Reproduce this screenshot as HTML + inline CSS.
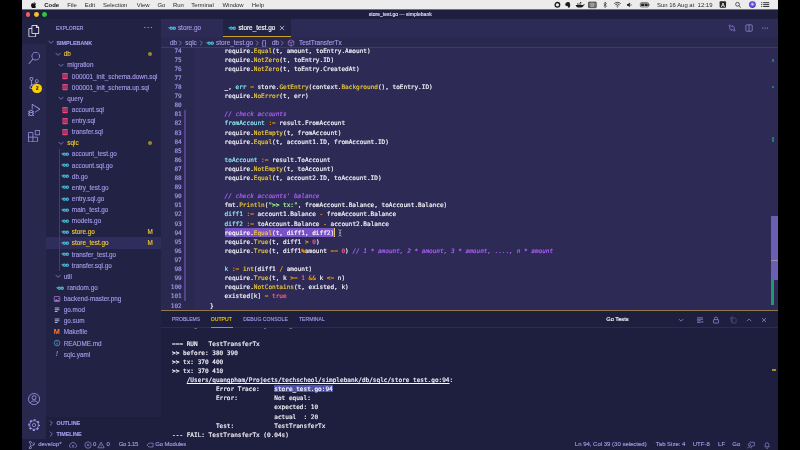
<!DOCTYPE html>
<html><head><meta charset="utf-8"><title>store_test.go — simplebank</title>
<style>
html,body{margin:0;padding:0;background:#000;width:800px;height:450px;overflow:hidden}
*{box-sizing:border-box}
#screen{filter:blur(0.35px);will-change:transform;position:absolute;left:22px;top:0;width:756.3px;height:450px;overflow:hidden;background:#1e1e3f}
#menubar{position:absolute;left:0;top:0;width:100%;height:9.4px;background:#ececec;font:5.95px "Liberation Sans",sans-serif;color:#2a2a2a;white-space:nowrap}
#menubar span{position:absolute;top:0;line-height:10.600px}
#menubar svg{position:absolute}
#titlebar{position:absolute;left:0;top:9.4px;width:100%;height:9.2px;background:#1e1e3f}
#titlebar .tl{position:absolute;top:2.6px;width:4.9px;height:4.9px;border-radius:50%}
#titlebar .t{position:absolute;left:346.700px;top:0.700px;font:5.100px/9.400px "Liberation Sans",sans-serif;color:#e4e0fa;white-space:nowrap;-webkit-text-stroke:0.120px}
#wbw{position:absolute;left:0;top:18.56px;width:756.300px;height:432px;will-change:transform;overflow:hidden}
#wb{zoom:0.50625;-webkit-text-stroke:0.250px;position:absolute;left:0;top:0;width:1494px;height:853px;font:13px "Liberation Sans",sans-serif;color:#a599e9;overflow:hidden}
#wb>div{position:absolute}
#act{left:0;top:0;width:48px;height:830.5px;background:#28284e}
#act svg{position:absolute;left:12px;width:24px;height:24px}
#side{left:48px;top:0;width:227px;height:830.5px;background:#222244;overflow:hidden}
#side .title{position:absolute;left:19px;top:1.500px;line-height:35px;font-size:10px;color:#a599e9}
#side .dots{position:absolute;left:192px;top:1.5px;line-height:32px;font-size:16px;letter-spacing:1px}
#side .hdr{position:absolute;left:0;width:100%;height:22px;line-height:24.500px;font-size:10.700px;font-weight:bold;color:#a599e9;background:#1e1e3f;padding-left:20px}
#side .hdr svg{position:absolute;left:2px;top:3px;width:16px;height:16px}
#tree{position:absolute;left:0;top:58px;width:100%}
.row{position:relative;height:22px;line-height:22px;white-space:nowrap;color:#a599e9;font-size:12.6px}
.row.y{color:#f0cb35}
.row.rsel{background:#2f2d5b}
.row svg.tw{position:relative;display:inline-block;vertical-align:top;width:16px;height:16px;top:3px;margin-right:3.500px;color:#a599e9}
.row svg.fi{position:relative;display:inline-block;vertical-align:top;width:16px;height:16px;top:3px;margin-right:5.500px}
.row span.ft{position:relative;display:inline-block;vertical-align:top;width:16px;height:22px;line-height:22px;text-align:center;margin-right:5.500px;-webkit-text-stroke:0}
.row .bdot{position:absolute;left:201px;top:7px;width:8px;height:8px;border-radius:50%;background:#9c8726}
.row .bm{position:absolute;left:200px;top:0;font-size:12.600px;color:#f0cb35}
#guide{position:absolute;left:25.800px;top:256px;width:1.200px;height:242px;background:#3f3d74}
#ed{left:275px;top:0;width:1219px;height:574.5px;background:#2d2b55;overflow:hidden}
#tabs{position:absolute;left:0;top:0;width:100%;height:35px;background:#2d2b55}
.tab{position:absolute;top:0;height:35px;line-height:35px;font-size:12.650px;white-space:nowrap}
.tab svg.fi{position:absolute;top:9.5px;width:16px;height:16px}
#bc{position:absolute;left:0;top:35px;width:100%;height:21px;line-height:25px;background:#29284f;font-size:12.750px;color:#a599e9;white-space:nowrap}
#bc span,#bc svg{position:absolute}
#code{position:absolute;left:0;top:52.400px;width:100%;font:12px/18px "DejaVu Sans Mono","Liberation Mono",monospace;color:#fbf9ff;-webkit-text-stroke:0.300px}
.ln{height:18px;position:relative}
.ln .num{position:absolute;left:0;width:40.5px;text-align:right;color:#a599e9}
.ln .src{position:absolute;left:67.5px;white-space:pre}
.f{color:#f0cb35}.o{color:#ff9d00}.n{color:#ff628c}.g{color:#a5ff90}.v{color:#92eef6}
.c{color:#b362ff;font-style:italic}
.sel{background:#7a52c7;display:inline-block;height:18px;color:#fff}
.cur{display:inline-block;width:1.800px;height:18px;background:#dcbf7a;vertical-align:top}
.ti{position:absolute;top:9.500px;width:16px;height:16px}
#edtop{position:absolute;left:0;top:56px;width:100%;height:1.600px;background:#3d3975}
#panel{left:275px;top:574.5px;width:1219px;height:256px;background:#1e1e3f;border-top:2px solid #94774c;overflow:hidden}
#panel .pi{position:absolute;top:9.500px;width:16px;height:16px}
#panel .pt{position:absolute;top:-0.500px;line-height:35px;font-size:10.100px;color:#a599e9}
#ph{position:absolute;left:0;top:0;width:100%;height:34.500px;background:#1e1e3f;border-bottom:1.500px solid #2c2a58}
#out{position:absolute;left:21.500px;top:19px;font:12px/18px "DejaVu Sans Mono","Liberation Mono",monospace;color:#fbf9ff;-webkit-text-stroke:0.300px}
.ol{height:18px;white-space:pre}
.lnk{text-decoration:underline}
.hl{background:#4a4fa8}
#status{left:0;top:830.5px;width:1494px;height:22.5px;background:#1e1e3f;font-size:11.850px;color:#a599e9;white-space:nowrap}
#status span{position:absolute;top:0;line-height:22px}
#status svg{position:absolute}
</style></head><body>
<div id="screen">
<div id="menubar">
<svg style="left:9.2px;top:1.6px;width:5.6px;height:6.4px" viewBox="0 0 170 200"><path fill="#111" d="M150 68c-1 1-21 12-21 37 0 29 25 39 26 39 0 1-4 14-13 27-8 12-17 24-30 24s-16-8-31-8c-15 0-20 8-32 8s-20-11-30-25C8 153 0 127 0 103c0-39 25-60 50-60 13 0 24 9 33 9 8 0 20-9 35-9 6 0 27 1 41 21zM104 31c6-7 11-18 11-28 0-1 0-3-0-4-10 0-23 7-30 15-6 7-11 17-11 28 0 2 0 3 0 4 1 0 2 0 3 0 9 0 21-6 27-15z"/></svg>
<span style="left:22.3px;font-weight:bold;color:#111">Code</span>
<span style="left:45.3px">File</span>
<span style="left:62.8px">Edit</span>
<span style="left:81px">Selection</span>
<span style="left:114.8px">View</span>
<span style="left:135.4px">Go</span>
<span style="left:151px">Run</span>
<span style="left:169.3px">Terminal</span>
<span style="left:200.5px">Window</span>
<span style="left:229.8px">Help</span>
<span style="left:635px">Sun 16 Aug at&nbsp; 12:19</span>
<svg style="left:520px;top:0;width:236px;height:9.400px" viewBox="520 0 236 9.400">
<circle cx="535.300" cy="4.800" r="2.300" fill="none" stroke="#1c1c1c" stroke-width="1.300"/>
<path d="M544.300 2.600c1.200-.9 3.100-.6 3.600.8.400 1.300.3 3.200-.5 4.100-.6.600-1.500.4-1.500-.4 0-.7-.5-1-1.300-1.100-1-.1-1.500-.8-1.400-1.700.1-.8.500-1.300 1.100-1.700z" fill="#1c1c1c"/>
<path d="M553.600 5h7.300c.5-.6 1.100-.8 1.800-.6-.2.500-.6.800-1.100 1-.6 1.500-2.100 2.200-4.200 2.200-2.300 0-3.600-.9-3.800-2.600zM555 3.400h1.200v1.200H555zM556.500 3.400h1.200v1.200h-1.200zM558 3.400h1.200v1.200H558zM558 1.900h1.200v1.200H558z" fill="#1c1c1c"/>
<rect x="566.400" y="2.100" width="7.800" height="5.600" rx=".6" fill="#9a9a9a" stroke="#2a2a2a" stroke-width=".7"/><path d="M567.700 2.100v5.600M572.900 2.100v5.600" stroke="#2a2a2a" stroke-width=".8" stroke-dasharray=".8 .6"/>
<path d="M581.600 3.300l2.800 2.800-1.400 1.500V2l1.400 1.500-2.800 2.800" fill="none" stroke="#1c1c1c" stroke-width=".6"/>
<g fill="none" stroke="#1c1c1c" stroke-width=".75"><path d="M592.100 3.700a4.700 4.700 0 0 1 6.600 0"/><path d="M593.200 4.900a3.100 3.100 0 0 1 4.400 0"/><path d="M594.300 6.100a1.600 1.600 0 0 1 2.200 0"/></g><circle cx="595.400" cy="7" r=".5" fill="#1c1c1c"/>
<path d="M605 3.900h1.100l1.700-1.500v4.900l-1.700-1.500H605z" fill="#1c1c1c"/><path d="M608.600 3.600a1.800 1.800 0 0 1 0 2.500" fill="none" stroke="#1c1c1c" stroke-width=".5"/>
<rect x="618.300" y="2.700" width="8.200" height="4.200" rx=".9" fill="none" stroke="#1c1c1c" stroke-width=".6"/><rect x="619.100" y="3.500" width="6.600" height="2.600" rx=".3" fill="#1c1c1c"/><path d="M627.100 4.100v1.400" stroke="#1c1c1c" stroke-width=".7"/><path d="M622.900 3.600l-1 1.300h1.100l-.6 1.200" fill="none" stroke="#ececec" stroke-width=".45"/>
<rect x="697.700" y="1.300" width="6.400" height="6.400" rx=".9" fill="#262626"/>
<circle cx="715.600" cy="4.300" r="1.900" fill="none" stroke="#1c1c1c" stroke-width=".7"/><path d="M717 5.700l1.900 1.900" stroke="#1c1c1c" stroke-width=".8"/>
<defs><radialGradient id="siri" cx=".5" cy=".45" r=".6"><stop offset="0" stop-color="#f4e9ff"/><stop offset=".35" stop-color="#b46be8"/><stop offset=".7" stop-color="#3b3fd0"/><stop offset="1" stop-color="#14142e"/></radialGradient></defs>
<circle cx="730.500" cy="4.600" r="3.300" fill="url(#siri)"/>
<path d="M741.300 2.700h6M741.300 4.600h6M741.300 6.500h6" stroke="#1c1c1c" stroke-width=".9"/><path d="M739.300 2.700h1M739.300 4.600h1M739.300 6.500h1" stroke="#1c1c1c" stroke-width=".9"/>
</svg>
<span style="left:699.100px;color:#fff;font-weight:bold;font-size:5.400px">A</span>

</div>
<div style="position:absolute;left:0;top:9px;width:100%;height:1px;background:#6f6f88;z-index:5"></div>
<div id="titlebar">
<div class="tl" style="left:3.6px;background:#f25f57"></div>
<div class="tl" style="left:12px;background:#f8bc31"></div>
<div class="tl" style="left:20.4px;background:#2bc840"></div>
<div class="t">store_test.go — simplebank</div>
</div>
<div id="wbw"><div id="wb">
<div id="act">
<div style="position:absolute;left:0;top:0;width:48px;height:50px;background:#222244"></div>
<svg style="top:12.5px" viewBox="0 0 24 24"><path fill="#fff" d="M17.5 0h-9L7 1.5V6H2.5L1 7.5v15.07L2.5 24h12.07L16 22.57V18h4.7l1.300-1.430V4.500L17.500 0zm0 2.120l2.380 2.380H17.500V2.120zm-3 20.380h-12v-15H7v9.070L8.500 18h6v4.500zm6-6h-12v-15H16V6h4.500v10.500z"/></svg>
<svg style="top:64.300px;left:11.500px" viewBox="0 0 24 24"><path fill="#a599e9" d="M15.250 0a8.250 8.250 0 0 0-6.180 13.720L1 22.880l1.120 1 8.050-9.120A8.251 8.251 0 1 0 15.250.010V0zm0 15a6.750 6.750 0 1 1 0-13.500 6.750 6.750 0 0 1 0 13.500z"/></svg>
<svg style="top:114.700px" viewBox="0 0 24 24"><path fill="#a599e9" d="M21.007 8.222A3.738 3.738 0 0 0 15.045 5.200a3.737 3.737 0 0 0 1.156 6.583 2.988 2.988 0 0 1-2.668 1.670h-2.990a4.456 4.456 0 0 0-2.989 1.165V7.400a3.737 3.737 0 1 0-1.494 0v9.117a3.776 3.776 0 1 0 1.816.099 2.990 2.990 0 0 1 2.668-1.667h2.990a4.484 4.484 0 0 0 4.223-3.039 3.736 3.736 0 0 0 3.250-3.687zM4.565 3.738a2.242 2.242 0 1 1 4.484 0 2.242 2.242 0 0 1-4.484 0zm4.484 16.441a2.242 2.242 0 1 1-4.484 0 2.242 2.242 0 0 1 4.484 0zm8.221-9.715a2.242 2.242 0 1 1 0-4.485 2.242 2.242 0 0 1 0 4.485z"/></svg>
<svg style="top:168px" viewBox="0 0 24 24"><path fill="#a599e9" d="M10.940 13.500l-1.320 1.320a3.730 3.730 0 0 0-7.240 0L1.060 13.500 0 14.560l1.720 1.720-.220.220V18H0v1.500h1.500v.080c.077.489.214.966.410 1.420L0 22.940 1.060 24l1.650-1.650A4.308 4.308 0 0 0 6 24a4.310 4.310 0 0 0 3.290-1.650L10.940 24 12 22.940 10.090 21c.198-.464.336-.951.410-1.450v-.100H12V18h-1.500v-1.500l-.220-.220L12 14.560l-1.060-1.060zM6 13.500a2.250 2.250 0 0 1 2.250 2.250h-4.500A2.250 2.250 0 0 1 6 13.500zm3 6a3.330 3.330 0 0 1-3 3 3.330 3.330 0 0 1-3-3v-2.250h6v2.250zm14.760-9.900v1.260L13.500 17.370V15.600l8.500-5.370L9 2v9.460a5.070 5.070 0 0 0-1.500-.720V.630L8.640 0l15.120 9.600z"/></svg>
<svg style="top:219.400px" viewBox="0 0 24 24"><path fill="#a599e9" d="M13.500 1.500L15 0h7.500L24 1.500V9l-1.500 1.500H15L13.500 9V1.500zm1.500 0V9h7.500V1.500H15zM0 15V6l1.500-1.500H9L10.500 6v7.500H18l1.500 1.500v7.500L18 24H1.500L0 22.500V15zm9-1.500V6H1.500v7.500H9zM9 15H1.500v7.500H9V15zm1.500 7.500H18V15h-7.500v7.500z"/></svg>
<div style="position:absolute;left:20.500px;top:127.500px;width:19px;height:19px;border-radius:50%;background:#fad000;color:#222;font-size:9px;font-weight:bold;line-height:19px;text-align:center">2</div>
<svg style="top:738px" viewBox="0 0 24 24"><g fill="none" stroke="#a599e9" stroke-width="1.600"><circle cx="12" cy="12" r="11"/><circle cx="12" cy="9.300" r="4"/><path d="M4.500 19.800c1.500-5.500 13.500-5.500 15 0"/></g></svg>
<svg style="top:790px" viewBox="0 0 24 24"><g fill="none" stroke="#a599e9"><circle cx="12" cy="12" r="10.300" stroke-width="2.800" stroke-dasharray="4.300 3.790" stroke-dashoffset="2.150"/><circle cx="12" cy="12" r="8.600" stroke-width="1.500"/><circle cx="12" cy="12" r="3.200" stroke-width="1.500"/></g></svg>
</div>
<div id="side">
<div class="title">EXPLORER</div>
<div class="dots">···</div>
<div class="hdr" style="top:35px;background:#222244"><svg class="tw" viewBox="0 0 16 16"><path d="M3.2 5.8L8 10.6l4.8-4.8" fill="none" stroke="currentColor" stroke-width="1.3"/></svg>SIMPLEBANK</div>
<div id="tree">
<div class="row y" style="padding-left:15px"><svg class="tw" viewBox="0 0 16 16"><path d="M3.2 5.8L8 10.6l4.8-4.8" fill="none" stroke="currentColor" stroke-width="1.3"/></svg><span class="lbl">db</span><span class="bdot"></span></div>
<div class="row " style="padding-left:22px"><svg class="tw" viewBox="0 0 16 16"><path d="M3.2 5.8L8 10.6l4.8-4.8" fill="none" stroke="currentColor" stroke-width="1.3"/></svg><span class="lbl">migration</span></div>
<div class="row " style="padding-left:29px"><svg class="fi" viewBox="0 0 16 16"><rect x="2.300" y="1.800" width="11.400" height="12.400" rx="2.200" fill="#f0457b"/><path d="M2.300 6h11.400M2.300 10h11.400" stroke="#222244" stroke-width="1.500"/></svg><span class="lbl">000001_init_schema.down.sql</span></div>
<div class="row " style="padding-left:29px"><svg class="fi" viewBox="0 0 16 16"><rect x="2.300" y="1.800" width="11.400" height="12.400" rx="2.200" fill="#f0457b"/><path d="M2.300 6h11.400M2.300 10h11.400" stroke="#222244" stroke-width="1.500"/></svg><span class="lbl">000001_init_schema.up.sql</span></div>
<div class="row " style="padding-left:22px"><svg class="tw" viewBox="0 0 16 16"><path d="M3.2 5.8L8 10.6l4.8-4.8" fill="none" stroke="currentColor" stroke-width="1.3"/></svg><span class="lbl">query</span></div>
<div class="row " style="padding-left:29px"><svg class="fi" viewBox="0 0 16 16"><rect x="2.300" y="1.800" width="11.400" height="12.400" rx="2.200" fill="#f0457b"/><path d="M2.300 6h11.400M2.300 10h11.400" stroke="#222244" stroke-width="1.500"/></svg><span class="lbl">account.sql</span></div>
<div class="row " style="padding-left:29px"><svg class="fi" viewBox="0 0 16 16"><rect x="2.300" y="1.800" width="11.400" height="12.400" rx="2.200" fill="#f0457b"/><path d="M2.300 6h11.400M2.300 10h11.400" stroke="#222244" stroke-width="1.500"/></svg><span class="lbl">entry.sql</span></div>
<div class="row " style="padding-left:29px"><svg class="fi" viewBox="0 0 16 16"><rect x="2.300" y="1.800" width="11.400" height="12.400" rx="2.200" fill="#f0457b"/><path d="M2.300 6h11.400M2.300 10h11.400" stroke="#222244" stroke-width="1.500"/></svg><span class="lbl">transfer.sql</span></div>
<div class="row y" style="padding-left:22px"><svg class="tw" viewBox="0 0 16 16"><path d="M3.2 5.8L8 10.6l4.8-4.8" fill="none" stroke="currentColor" stroke-width="1.3"/></svg><span class="lbl">sqlc</span><span class="bdot"></span></div>
<div class="row " style="padding-left:29px"><svg class="fi" viewBox="0 0 16 16"><g fill="none" stroke="#4fd0e8" stroke-width="2.100"><ellipse cx="6.3" cy="8.2" rx="2.3" ry="2.2"/><ellipse cx="12.3" cy="8.2" rx="2.3" ry="2.2"/></g><path d="M0.5 6.7h3M1.5 8.6h2" stroke="#4fd0e8" stroke-width="1.100"/></svg><span class="lbl">account_test.go</span></div>
<div class="row " style="padding-left:29px"><svg class="fi" viewBox="0 0 16 16"><g fill="none" stroke="#4fd0e8" stroke-width="2.100"><ellipse cx="6.3" cy="8.2" rx="2.3" ry="2.2"/><ellipse cx="12.3" cy="8.2" rx="2.3" ry="2.2"/></g><path d="M0.5 6.7h3M1.5 8.6h2" stroke="#4fd0e8" stroke-width="1.100"/></svg><span class="lbl">account.sql.go</span></div>
<div class="row " style="padding-left:29px"><svg class="fi" viewBox="0 0 16 16"><g fill="none" stroke="#4fd0e8" stroke-width="2.100"><ellipse cx="6.3" cy="8.2" rx="2.3" ry="2.2"/><ellipse cx="12.3" cy="8.2" rx="2.3" ry="2.2"/></g><path d="M0.5 6.7h3M1.5 8.6h2" stroke="#4fd0e8" stroke-width="1.100"/></svg><span class="lbl">db.go</span></div>
<div class="row " style="padding-left:29px"><svg class="fi" viewBox="0 0 16 16"><g fill="none" stroke="#4fd0e8" stroke-width="2.100"><ellipse cx="6.3" cy="8.2" rx="2.3" ry="2.2"/><ellipse cx="12.3" cy="8.2" rx="2.3" ry="2.2"/></g><path d="M0.5 6.7h3M1.5 8.6h2" stroke="#4fd0e8" stroke-width="1.100"/></svg><span class="lbl">entry_test.go</span></div>
<div class="row " style="padding-left:29px"><svg class="fi" viewBox="0 0 16 16"><g fill="none" stroke="#4fd0e8" stroke-width="2.100"><ellipse cx="6.3" cy="8.2" rx="2.3" ry="2.2"/><ellipse cx="12.3" cy="8.2" rx="2.3" ry="2.2"/></g><path d="M0.5 6.7h3M1.5 8.6h2" stroke="#4fd0e8" stroke-width="1.100"/></svg><span class="lbl">entry.sql.go</span></div>
<div class="row " style="padding-left:29px"><svg class="fi" viewBox="0 0 16 16"><g fill="none" stroke="#4fd0e8" stroke-width="2.100"><ellipse cx="6.3" cy="8.2" rx="2.3" ry="2.2"/><ellipse cx="12.3" cy="8.2" rx="2.3" ry="2.2"/></g><path d="M0.5 6.7h3M1.5 8.6h2" stroke="#4fd0e8" stroke-width="1.100"/></svg><span class="lbl">main_test.go</span></div>
<div class="row " style="padding-left:29px"><svg class="fi" viewBox="0 0 16 16"><g fill="none" stroke="#4fd0e8" stroke-width="2.100"><ellipse cx="6.3" cy="8.2" rx="2.3" ry="2.2"/><ellipse cx="12.3" cy="8.2" rx="2.3" ry="2.2"/></g><path d="M0.5 6.7h3M1.5 8.6h2" stroke="#4fd0e8" stroke-width="1.100"/></svg><span class="lbl">models.go</span></div>
<div class="row y" style="padding-left:29px"><svg class="fi" viewBox="0 0 16 16"><g fill="none" stroke="#4fd0e8" stroke-width="2.100"><ellipse cx="6.3" cy="8.2" rx="2.3" ry="2.2"/><ellipse cx="12.3" cy="8.2" rx="2.3" ry="2.2"/></g><path d="M0.5 6.7h3M1.5 8.6h2" stroke="#4fd0e8" stroke-width="1.100"/></svg><span class="lbl">store.go</span><span class="bm">M</span></div>
<div class="row y rsel" style="padding-left:29px"><svg class="fi" viewBox="0 0 16 16"><g fill="none" stroke="#4fd0e8" stroke-width="2.100"><ellipse cx="6.3" cy="8.2" rx="2.3" ry="2.2"/><ellipse cx="12.3" cy="8.2" rx="2.3" ry="2.2"/></g><path d="M0.5 6.7h3M1.5 8.6h2" stroke="#4fd0e8" stroke-width="1.100"/></svg><span class="lbl">store_test.go</span><span class="bm">M</span></div>
<div class="row " style="padding-left:29px"><svg class="fi" viewBox="0 0 16 16"><g fill="none" stroke="#4fd0e8" stroke-width="2.100"><ellipse cx="6.3" cy="8.2" rx="2.3" ry="2.2"/><ellipse cx="12.3" cy="8.2" rx="2.3" ry="2.2"/></g><path d="M0.5 6.7h3M1.5 8.6h2" stroke="#4fd0e8" stroke-width="1.100"/></svg><span class="lbl">transfer_test.go</span></div>
<div class="row " style="padding-left:29px"><svg class="fi" viewBox="0 0 16 16"><g fill="none" stroke="#4fd0e8" stroke-width="2.100"><ellipse cx="6.3" cy="8.2" rx="2.3" ry="2.2"/><ellipse cx="12.3" cy="8.2" rx="2.3" ry="2.2"/></g><path d="M0.5 6.7h3M1.5 8.6h2" stroke="#4fd0e8" stroke-width="1.100"/></svg><span class="lbl">transfer.sql.go</span></div>
<div class="row " style="padding-left:15px"><svg class="tw" viewBox="0 0 16 16"><path d="M3.2 5.8L8 10.6l4.8-4.8" fill="none" stroke="currentColor" stroke-width="1.3"/></svg><span class="lbl">util</span></div>
<div class="row " style="padding-left:20px"><svg class="fi" viewBox="0 0 16 16"><g fill="none" stroke="#4fd0e8" stroke-width="2.100"><ellipse cx="6.3" cy="8.2" rx="2.3" ry="2.2"/><ellipse cx="12.3" cy="8.2" rx="2.3" ry="2.2"/></g><path d="M0.5 6.7h3M1.5 8.6h2" stroke="#4fd0e8" stroke-width="1.100"/></svg><span class="lbl">random.go</span></div>
<div class="row " style="padding-left:13px"><svg class="fi" viewBox="0 0 16 16"><rect x="2.5" y="3" width="11" height="10" rx="1" fill="none" stroke="#a074c4" stroke-width="1.6"/><path d="M3 12l3.5-4 2.5 2.5 1.5-1.5 2.5 3z" fill="#a074c4"/><circle cx="10.5" cy="6.3" r="1.1" fill="#a074c4"/></svg><span class="lbl">backend-master.png</span></div>
<div class="row " style="padding-left:13px"><svg class="fi" viewBox="0 0 16 16"><path d="M3.5 4h9M3.5 7.5h9M3.5 11h5.5" stroke="#b5b0d8" stroke-width="2"/></svg><span class="lbl">go.mod</span></div>
<div class="row " style="padding-left:13px"><svg class="fi" viewBox="0 0 16 16"><path d="M3.5 4h9M3.5 7.5h9M3.5 11h5.5" stroke="#b5b0d8" stroke-width="2"/></svg><span class="lbl">go.sum</span></div>
<div class="row " style="padding-left:13px"><span class="fi ft" style="color:#ff7a2a;font-weight:bold;font-size:14.500px">M</span><span class="lbl">Makefile</span></div>
<div class="row " style="padding-left:13px"><svg class="fi" viewBox="0 0 16 16"><circle cx="8" cy="8" r="5.6" fill="none" stroke="#5aa9d8" stroke-width="1.4"/><path d="M8 7.2v4" stroke="#5aa9d8" stroke-width="1.6"/><circle cx="8" cy="5" r="0.95" fill="#5aa9d8"/></svg><span class="lbl">README.md</span></div>
<div class="row " style="padding-left:13px"><span class="fi ft" style="color:#c06ae0;font-style:italic;font-weight:bold;font-size:14px">!</span><span class="lbl">sqlc.yaml</span></div>

</div>
<div id="guide"></div>
<div class="hdr" style="top:786.5px"><svg class="tw" viewBox="0 0 16 16"><path d="M5.8 3.2L10.6 8l-4.8 4.8" fill="none" stroke="currentColor" stroke-width="1.3"/></svg>OUTLINE</div>
<div class="hdr" style="top:808.5px"><svg class="tw" viewBox="0 0 16 16"><path d="M5.8 3.2L10.6 8l-4.8 4.8" fill="none" stroke="currentColor" stroke-width="1.3"/></svg>TIMELINE</div>
</div>
<div id="ed">
<div style="position:absolute;left:0;top:57px;width:65.500px;height:518px;background:#29284f"></div>
<div style="position:absolute;left:45.500px;top:180.500px;width:2.500px;height:377px;background:#544190"></div>
<div id="code">
<div class="ln"><span class="num">74</span><span class="src">        require.<span class="f">Equal</span>(t, amount, toEntry.Amount)</span></div>
<div class="ln"><span class="num">75</span><span class="src">        require.<span class="f">NotZero</span>(t, toEntry.ID)</span></div>
<div class="ln"><span class="num">76</span><span class="src">        require.<span class="f">NotZero</span>(t, toEntry.CreatedAt)</span></div>
<div class="ln"><span class="num">77</span><span class="src"></span></div>
<div class="ln"><span class="num">78</span><span class="src">        _, <span class="v">err</span> <span class="o">=</span> store.<span class="f">GetEntry</span>(context.<span class="f">Background</span>(), toEntry.ID)</span></div>
<div class="ln"><span class="num">79</span><span class="src">        require.<span class="f">NoError</span>(t, err)</span></div>
<div class="ln"><span class="num">80</span><span class="src"></span></div>
<div class="ln"><span class="num">81</span><span class="src">        <span class="c">// check accounts</span></span></div>
<div class="ln"><span class="num">82</span><span class="src">        <span class="v">fromAccount</span> <span class="o">:=</span> result.FromAccount</span></div>
<div class="ln"><span class="num">83</span><span class="src">        require.<span class="f">NotEmpty</span>(t, fromAccount)</span></div>
<div class="ln"><span class="num">84</span><span class="src">        require.<span class="f">Equal</span>(t, account1.ID, fromAccount.ID)</span></div>
<div class="ln"><span class="num">85</span><span class="src"></span></div>
<div class="ln"><span class="num">86</span><span class="src">        <span class="v">toAccount</span> <span class="o">:=</span> result.ToAccount</span></div>
<div class="ln"><span class="num">87</span><span class="src">        require.<span class="f">NotEmpty</span>(t, toAccount)</span></div>
<div class="ln"><span class="num">88</span><span class="src">        require.<span class="f">Equal</span>(t, account2.ID, toAccount.ID)</span></div>
<div class="ln"><span class="num">89</span><span class="src"></span></div>
<div class="ln"><span class="num">90</span><span class="src">        <span class="c">// check accounts' balance</span></span></div>
<div class="ln"><span class="num">91</span><span class="src">        fmt.<span class="f">Println</span>(<span class="g">"&gt;&gt; tx:"</span>, fromAccount.Balance, toAccount.Balance)</span></div>
<div class="ln"><span class="num">92</span><span class="src">        <span class="v">diff1</span> <span class="o">:=</span> account1.Balance <span class="o">-</span> fromAccount.Balance</span></div>
<div class="ln"><span class="num">93</span><span class="src">        <span class="v">diff2</span> <span class="o">:=</span> toAccount.Balance <span class="o">-</span> account2.Balance</span></div>
<div class="ln"><span class="num">94</span><span class="src">        <span class="sel">require.<span class="f">Equal</span>(t, diff1, diff2)</span><span class="cur"></span></span></div>
<div class="ln"><span class="num">95</span><span class="src">        require.<span class="f">True</span>(t, diff1 <span class="o">&gt;</span> <span class="n">0</span>)</span></div>
<div class="ln"><span class="num">96</span><span class="src">        require.<span class="f">True</span>(t, diff1<span class="o">%</span>amount <span class="o">==</span> <span class="n">0</span>) <span class="c">// 1 * amount, 2 * amount, 3 * amount, ...., n * amount</span></span></div>
<div class="ln"><span class="num">97</span><span class="src"></span></div>
<div class="ln"><span class="num">98</span><span class="src">        <span class="v">k</span> <span class="o">:=</span> <span class="f">int</span>(diff1 <span class="o">/</span> amount)</span></div>
<div class="ln"><span class="num">99</span><span class="src">        require.<span class="f">True</span>(t, k <span class="o">&gt;=</span> <span class="n">1</span> <span class="o">&amp;&amp;</span> k <span class="o">&lt;=</span> n)</span></div>
<div class="ln"><span class="num">100</span><span class="src">        require.<span class="f">NotContains</span>(t, existed, k)</span></div>
<div class="ln"><span class="num">101</span><span class="src">        existed[k] <span class="o">=</span> <span class="n">true</span></span></div>
<div class="ln"><span class="num">102</span><span class="src">    }</span></div>

</div>
<div id="tabs">
<div class="tab" style="left:0;width:122.500px;background:#2d2b55;color:#a599e9"><svg class="fi" style="left:14px" viewBox="0 0 16 16"><g fill="none" stroke="#4fd0e8" stroke-width="2.100"><ellipse cx="6.3" cy="8.2" rx="2.3" ry="2.2"/><ellipse cx="12.3" cy="8.2" rx="2.3" ry="2.2"/></g><path d="M0.5 6.7h3M1.5 8.6h2" stroke="#4fd0e8" stroke-width="1.100"/></svg><span style="position:absolute;left:33px">store.go</span></div>
<div class="tab" style="left:122.500px;width:133.500px;background:#222244;color:#fff;border-bottom:2px solid #c9a227"><svg class="fi" style="left:10px" viewBox="0 0 16 16"><g fill="none" stroke="#4fd0e8" stroke-width="2.100"><ellipse cx="6.3" cy="8.2" rx="2.3" ry="2.2"/><ellipse cx="12.3" cy="8.2" rx="2.3" ry="2.2"/></g><path d="M0.5 6.7h3M1.5 8.6h2" stroke="#4fd0e8" stroke-width="1.100"/></svg><span style="position:absolute;left:30px">store_test.go</span><svg style="position:absolute;left:108.500px;top:9.500px;width:16px;height:16px" viewBox="0 0 16 16"><path d="M3.800 3.800l8.400 8.400M12.200 3.800l-8.400 8.400" stroke="#e8e4ff" stroke-width="1.300"/></svg></div>
</div>
<div id="bc">
<span style="left:17.300px">db</span><svg style="left:28.7px;top:5px;width:16px;height:16px" viewBox="0 0 16 16"><path d="M5.800 3.200L10.600 8l-4.800 4.800" fill="none" stroke="#a599e9" stroke-width="1.200"/></svg><span style="left:47.700px">sqlc</span><svg style="left:71.0px;top:5px;width:16px;height:16px" viewBox="0 0 16 16"><path d="M5.800 3.200L10.600 8l-4.800 4.800" fill="none" stroke="#a599e9" stroke-width="1.200"/></svg>
<svg style="left:88.300px;top:4.500px;width:16px;height:16px" viewBox="0 0 16 16"><g fill="none" stroke="#4fd0e8" stroke-width="2.100"><ellipse cx="6.3" cy="8.2" rx="2.3" ry="2.2"/><ellipse cx="12.3" cy="8.2" rx="2.3" ry="2.2"/></g><path d="M0.5 6.7h3M1.5 8.6h2" stroke="#4fd0e8" stroke-width="1.100"/></svg><span style="left:108.100px">store_test.go</span><svg style="left:180.8px;top:5px;width:16px;height:16px" viewBox="0 0 16 16"><path d="M5.800 3.200L10.600 8l-4.800 4.800" fill="none" stroke="#a599e9" stroke-width="1.200"/></svg><span style="left:198.500px;letter-spacing:1px">{}</span><span style="left:218.800px">db</span><svg style="left:231.0px;top:5px;width:16px;height:16px" viewBox="0 0 16 16"><path d="M5.800 3.200L10.600 8l-4.800 4.800" fill="none" stroke="#a599e9" stroke-width="1.200"/></svg>
<svg style="left:248.300px;top:4.500px;width:16px;height:16px" viewBox="0 0 16 16"><g fill="none" stroke="#b48ae8" stroke-width="1.200" stroke-linejoin="round"><path d="M8 1.800l5.500 2.800v6.600L8 14.200l-5.500-3V4.600z"/><path d="M2.500 4.600L8 7.600l5.500-3M8 7.600v6.600"/></g></svg>
<span style="left:272.100px">TestTransferTx</span>
</div>
<div id="edtop"></div>
<div style="position:absolute;left:1205.500px;top:79px;width:4.500px;height:5px;background:#1e7c6a"></div>
<div style="position:absolute;left:1205.500px;top:132px;width:4.500px;height:5px;background:#1e7c6a"></div>
<div style="position:absolute;left:1205.500px;top:233px;width:4.500px;height:10px;background:#1e7c6a"></div>
<div style="position:absolute;left:1204px;top:390px;width:15px;height:125px;background:#6b5fb3"></div>
<div style="position:absolute;left:1204px;top:476px;width:15px;height:2px;background:#a58f9c"></div>
<div style="position:absolute;left:1204px;top:514.500px;width:6px;height:51px;background:#1f9a70"></div>
<svg style="position:absolute;left:347.500px;top:409px;width:12px;height:27.500px" viewBox="0 0 14 32"><path d="M3 8.500c2.500 0 4 .8 4 2.500v10c0 1.700-1.500 2.500-4 2.500M11 8.500c-2.500 0-4 .8-4 2.500M7 21c0 1.700 1.500 2.500 4 2.500M4.500 16h5" fill="none" stroke="#1a1a30" stroke-width="3.200"/><path d="M3 8.500c2.500 0 4 .8 4 2.500v10c0 1.700-1.500 2.500-4 2.500M11 8.500c-2.500 0-4 .8-4 2.500M7 21c0 1.700 1.500 2.500 4 2.500M4.500 16h5" fill="none" stroke="#e8e6f0" stroke-width="1.400"/></svg>
<svg class="ti" style="left:1120.400px" viewBox="0 0 16 16"><g fill="none" stroke="#8f7fe0" stroke-width="1.300"><circle cx="3.500" cy="3.500" r="1.600"/><circle cx="12.500" cy="12.500" r="1.600"/><path d="M3.500 5.200v4.300a2 2 0 0 0 2 2h3M12.500 10.800V6.500a2 2 0 0 0-2-2h-3M9 2.500l-2 2 2 2M7 9.500l2 2-2 2"/></g></svg>
<svg class="ti" style="left:1153.800px" viewBox="0 0 16 16"><g fill="none" stroke="#a599e9" stroke-width="1.300"><rect x="1.700" y="1.700" width="12.600" height="12.600" rx="1.500"/><path d="M8 1.700v12.600"/></g></svg>
<svg class="ti" style="left:1184.600px" viewBox="0 0 16 16"><g fill="#a599e9"><circle cx="3.500" cy="8" r="1.150"/><circle cx="8" cy="8" r="1.150"/><circle cx="12.500" cy="8" r="1.150"/></g></svg>

</div>
<div id="panel">
<div id="out">
<div class="ol">Running tool: /usr/local/go/bin/go test -timeout 30s -run ^TestTransferTx$</div>
<div class="ol"></div>
<div class="ol">=== RUN   TestTransferTx</div>
<div class="ol">&gt;&gt; before: 380 390</div>
<div class="ol">&gt;&gt; tx: 370 400</div>
<div class="ol">&gt;&gt; tx: 370 410</div>
<div class="ol">    <span class="lnk">/Users/quangpham/Projects/techschool/simplebank/db/sqlc/store_test.go:94</span>:</div>
<div class="ol">            Error Trace:    <span class="hl">store_test.go:94</span></div>
<div class="ol">            Error:          Not equal:</div>
<div class="ol">                            expected: 10</div>
<div class="ol">                            actual  : 20</div>
<div class="ol">            Test:           TestTransferTx</div>
<div class="ol">--- FAIL: TestTransferTx (0.04s)</div>

</div>
<div style="position:absolute;left:1206px;top:114px;width:9px;height:5px;background:#a88d2c"></div>
<div id="ph">
<span class="pt" style="left:21px">PROBLEMS</span>
<span class="pt" style="left:98px;color:#fad000">OUTPUT</span>
<span class="pt" style="left:162px">DEBUG CONSOLE</span>
<span class="pt" style="left:272px">TERMINAL</span>
<span class="pt" style="left:879px;font-size:11.300px;color:#fff;top:0.500px">Go Tests</span>
<svg class="pi" style="left:1018.700px" viewBox="0 0 16 16"><path d="M3.500 5.800L8 10.300l4.500-4.500" fill="none" stroke="#a599e9" stroke-width="1.300"/></svg>
<svg class="pi" style="left:1055.400px" viewBox="0 0 16 16"><path d="M2 3.500h12M2 6.500h12M2 9.500h7.500M2 12.500h7.500" stroke="#a599e9" stroke-width="1.300"/><path d="M10.800 9.800l3.400 3.400M14.200 9.800l-3.400 3.400" stroke="#a599e9" stroke-width="1.200"/></svg>
<svg class="pi" style="left:1087.800px" viewBox="0 0 16 16"><g fill="none" stroke="#a599e9" stroke-width="1.300"><rect x="3" y="7.200" width="10" height="6.800" rx="1"/><path d="M5 7.200V5a3 3 0 0 1 6 0v2.200"/></g></svg>
<svg class="pi" style="left:1121.400px;opacity:.42" viewBox="0 0 16 16"><g fill="none" stroke="#a599e9" stroke-width="1.300"><path d="M6.500 4h5l2.500 2.500V14h-7.500z"/><path d="M6.500 11.500H4V2h5"/><path d="M2 5.500l2-2 2 2"/></g></svg>
<svg class="pi" style="left:1152.200px" viewBox="0 0 16 16"><path d="M3.500 10.300L8 5.800l4.500 4.500" fill="none" stroke="#a599e9" stroke-width="1.300"/></svg>
<svg class="pi" style="left:1183.600px" viewBox="0 0 16 16"><path d="M4 4l8 8M12 4l-8 8" stroke="#a599e9" stroke-width="1.300"/></svg>
<div style="position:absolute;left:98px;top:31px;width:44px;height:1.500px;background:#b0923f"></div>
</div>
</div>
<div id="status">
<svg style="left:11px;top:3px;width:16px;height:16px" viewBox="0 0 24 24"><path fill="#a599e9" d="M21.007 8.222A3.738 3.738 0 0 0 15.045 5.200a3.737 3.737 0 0 0 1.156 6.583 2.988 2.988 0 0 1-2.668 1.670h-2.990a4.456 4.456 0 0 0-2.989 1.165V7.400a3.737 3.737 0 1 0-1.494 0v9.117a3.776 3.776 0 1 0 1.816.099 2.990 2.990 0 0 1 2.668-1.667h2.990a4.484 4.484 0 0 0 4.223-3.039 3.736 3.736 0 0 0 3.250-3.687zM4.565 3.738a2.242 2.242 0 1 1 4.484 0 2.242 2.242 0 0 1-4.484 0zm4.484 16.441a2.242 2.242 0 1 1-4.484 0 2.242 2.242 0 0 1 4.484 0zm8.221-9.715a2.242 2.242 0 1 1 0-4.485 2.242 2.242 0 0 1 0 4.485z"/></svg>
<svg style="left:92.500px;top:3px;width:16px;height:16px" viewBox="0 0 16 16"><g fill="none" stroke="#a599e9" stroke-width="1.200"><path d="M4.500 12.500h-1a3 3 0 0 1 0-6 4.500 4.500 0 0 1 8.800-.5 3.300 3.300 0 0 1 .2 6.500h-1"/><path d="M8 14V8.500M5.800 10.500L8 8.300l2.200 2.200"/></g></svg>
<svg style="left:122.500px;top:3px;width:16px;height:16px" viewBox="0 0 16 16"><g fill="none" stroke="#a599e9" stroke-width="1.200"><circle cx="8" cy="8" r="6.300"/><path d="M5.600 5.600l4.800 4.800M10.400 5.600l-4.800 4.800"/></g></svg>
<svg style="left:148.500px;top:3px;width:16px;height:16px" viewBox="0 0 16 16"><g fill="none" stroke="#a599e9" stroke-width="1.200"><path d="M8 2.200L1.800 13.500h12.400z"/><path d="M8 6.500v3.800M8 11.300v1.200"/></g></svg>
<svg style="left:245px;top:3px;width:16px;height:16px" viewBox="0 0 16 16"><g fill="none" stroke="#a599e9" stroke-width="1.200"><path d="M2 8l4-3.800h8v7.600H6z"/></g></svg>
<svg style="left:1432px;top:3px;width:16px;height:16px" viewBox="0 0 16 16"><g fill="none" stroke="#a599e9" stroke-width="1.200"><path d="M5 2.500h9.500v7h-3l-2.500 2.300v-2.300"/><circle cx="4.800" cy="7.300" r="2.200"/><path d="M1.300 14.500c.3-4 6.700-4 7 0"/></g></svg>
<svg style="left:1463.500px;top:3px;width:16px;height:16px" viewBox="0 0 16 16"><g fill="none" stroke="#a599e9" stroke-width="1.200"><path d="M3.500 11.500c1-1 1-2 1-4.500a3.500 3.500 0 0 1 7 0c0 2.500 0 3.500 1 4.500z"/><path d="M6.500 13.300a1.500 1.500 0 0 0 3 0"/></g></svg>
<span style="left:32px">develop*</span>
<span style="left:140px">0</span><span style="left:167px">0</span>
<span style="left:191px;letter-spacing:-0.550px">Go 1.15</span>
<span style="left:263px;letter-spacing:-0.250px">Go Modules</span>
<span style="left:1092px">Ln 94, Col 39 (30 selected)</span>
<span style="left:1252px">Tab Size: 4</span>
<span style="left:1325px">UTF-8</span>
<span style="left:1375px">LF</span>
<span style="left:1403px">Go</span>
</div>
</div>
</div></div>
</body></html>
